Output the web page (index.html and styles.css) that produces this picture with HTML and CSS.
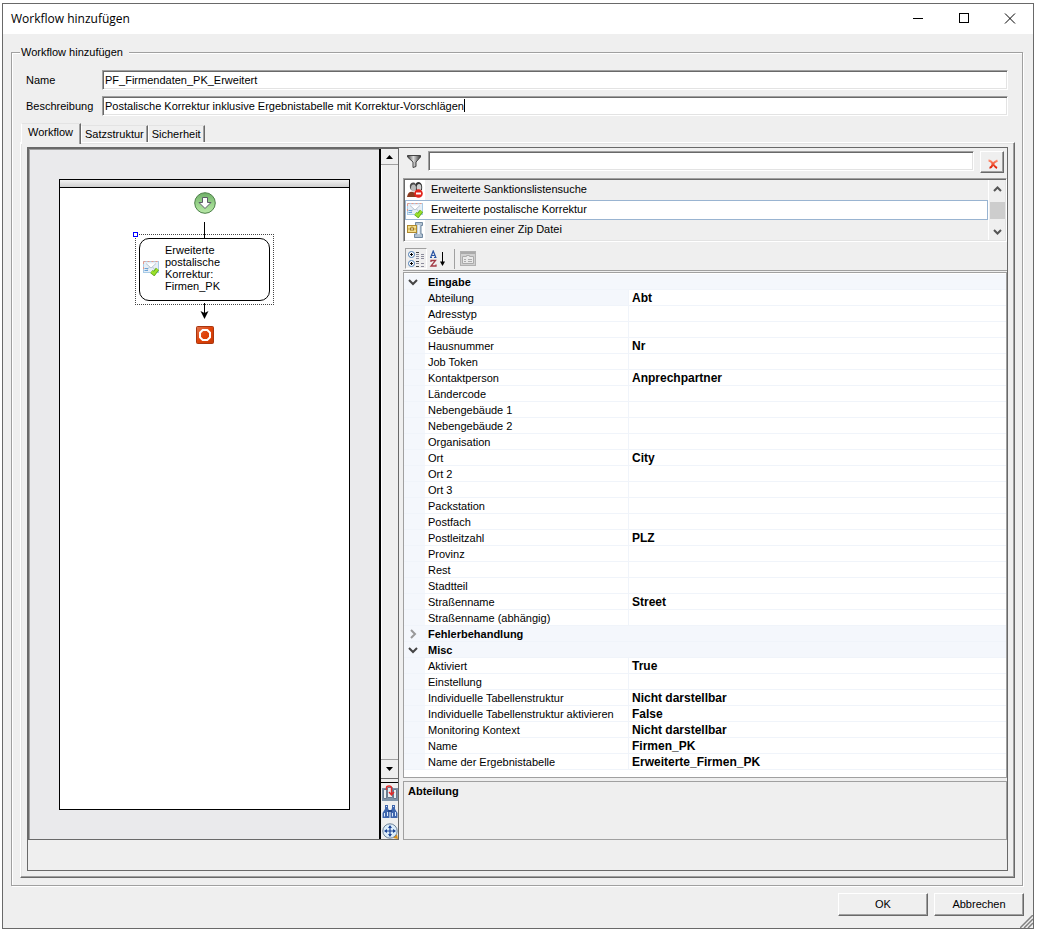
FILE: index.html
```html
<!DOCTYPE html>
<html lang="de">
<head>
<meta charset="UTF-8" />
<title>Workflow hinzufügen</title>
<link rel="stylesheet" href="styles.css">
</head>
<body>
  <svg width="0" height="0" class="defs" aria-hidden="true">
    <defs>
      <linearGradient id="green" x1="0" y1="0" x2="0" y2="1">
        <stop offset="0" stop-color="#6fae68" /><stop offset="0.55" stop-color="#9ad58c" /><stop offset="1" stop-color="#b9e8a8" />
      </linearGradient>
      <linearGradient id="red" x1="0" y1="0" x2="1" y2="1">
        <stop offset="0" stop-color="#e0744f" /><stop offset="0.5" stop-color="#e04208" /><stop offset="1" stop-color="#c93a06" />
      </linearGradient>
      <linearGradient id="metal" x1="0" y1="0" x2="1" y2="0">
        <stop offset="0" stop-color="#333" /><stop offset="0.45" stop-color="#ddd" /><stop offset="1" stop-color="#333" />
      </linearGradient>
      <linearGradient id="cross" x1="0" y1="0" x2="0" y2="1">
        <stop offset="0" stop-color="#ff8a6c" /><stop offset="1" stop-color="#dd1c00" />
      </linearGradient>
      <symbol id="mail" viewBox="0 0 16 16">
        <rect x="0.5" y="1.5" width="15" height="11" fill="#e6eef6" stroke="#a9cbe6" />
        <path d="M0.5 1.5H15.5" stroke="#e89a8a" stroke-dasharray="2 2" />
        <path d="M0.5 2V12" stroke="#e89a8a" stroke-dasharray="2 3" />
        <path d="M4 3.5H13L8.5 8Z" fill="#fff" />
        <path d="M3 3.5L8 8L13 3.5M3 11L6.5 7M13 11L9.5 7" fill="none" stroke="#b9c6d2" />
        <path d="M1.5 8.5H5M1.5 10.5H5" stroke="#6aa3d8" />
        <path d="M8.5 11.5L11 13.5L14.500 9" fill="none" stroke="#5aa516" stroke-width="4" />
        <path d="M8.5 11.5L11 13.5L14.500 9" fill="none" stroke="#9be02b" stroke-width="2.400" />
      </symbol>
    </defs>
  </svg>

  <div class="window">
    <header class="titlebar">
      <h1>Workflow hinzufügen</h1>
      <div class="window-controls">
        <button type="button" aria-label="Minimieren"><svg width="12" height="12"><path d="M1 5.5H11" stroke="#000" /></svg></button>
        <button type="button" aria-label="Maximieren"><svg width="12" height="12"><rect x="1.5" y="0.5" width="9" height="9" fill="none" stroke="#000" /></svg></button>
        <button type="button" aria-label="Schließen"><svg width="12" height="12"><path d="M1 0.500L11 10.500M11 0.500L1 10.500" stroke="#000" /></svg></button>
      </div>
    </header>

    <form class="dialog">
      <fieldset class="group">
        <legend>Workflow hinzufügen</legend>

        <div class="fields">
          <label for="name">Name</label>
          <input class="sunken" id="name" type="text" value="PF_Firmendaten_PK_Erweitert" />
          <label for="beschreibung">Beschreibung</label>
          <div class="field">
            <input class="sunken" id="beschreibung" type="text" value="Postalische Korrektur inklusive Ergebnistabelle mit Korrektur-Vorschlägen" />
            <span class="caret" id="caret"></span>
          </div>
        </div>

        <div class="tabs" role="tablist">
          <button type="button" class="tab active" role="tab" aria-selected="true">Workflow</button>
          <button type="button" class="tab" role="tab" aria-selected="false">Satzstruktur</button>
          <button type="button" class="tab" role="tab" aria-selected="false">Sicherheit</button>
        </div>

        <div class="tab-panel" role="tabpanel">
          <div class="pane">

            <section class="designer">
              <div class="canvas">
                <div class="sheet">
                  <div class="sheet-head"></div>
                  <div class="flow">
                    <svg width="22" height="22" viewBox="0 0 22 22">
                      <circle cx="11" cy="11" r="10.3" fill="url(#green)" stroke="#4d8049" />
                      <path d="M8.5 5.5H13.5V10.5H17L11 16.5L5 10.5H8.5Z" fill="#fff" stroke="#5b5b68" />
                    </svg>
                    <div class="connector"></div>
                    <div class="activity">
                      <span class="handle"></span>
                      <svg width="16" height="16"><use href="#mail" /></svg>
                      <span class="activity-text">Erweiterte postalische Korrektur: Firmen_PK</span>
                    </div>
                    <svg class="arrow" width="9" height="17" viewBox="0 0 9 17">
                      <path d="M4.5 0V12" stroke="#000" />
                      <path d="M0.5 8L4.5 10L8.5 8L4.5 16Z" fill="#000" />
                    </svg>
                    <svg width="18" height="18" viewBox="0 0 18 18">
                      <rect x="0.5" y="0.5" width="17" height="17" rx="1" fill="url(#red)" stroke="#a9360f" />
                      <path d="M6.7 4H11.3L14 6.7V11.3L11.3 14H6.7L4 11.3V6.7Z" fill="none" stroke="#fff" stroke-width="2" />
                    </svg>
                  </div>
                </div>
              </div>
              <div class="designer-bar">
                <button type="button" class="scroll-btn" aria-label="Nach oben"><svg width="7" height="4"><path d="M0 4L3.5 0L7 4Z" /></svg></button>
                <div class="track"></div>
                <button type="button" class="scroll-btn tall" aria-label="Nach unten"><svg width="7" height="4"><path d="M0 0L3.5 4L7 0Z" /></svg></button>
                <div class="tools">
                  <button type="button" aria-label="Seiten">
                    <svg width="16" height="16" viewBox="0 0 16 16">
                      <path d="M0 3H16V16H0Z" fill="#7f93a8" />
                      <path d="M1.5 4.5H4.5V13.5H1.5ZM5.5 2.5H10.5V12.5H5.5ZM11.5 4.5H14.5V13.5H11.5Z" fill="#e9eef2" stroke="#687b90" />
                      <path d="M4.5 5V2.5Q4.5 1 7 1Q9.500 1 9.500 3V9M7 7L9.500 10L12 7" fill="none" stroke="#e02a2a" stroke-width="1.400" />
                    </svg>
                  </button>
                  <button type="button" aria-label="Suchen">
                    <svg width="16" height="16" viewBox="0 0 16 16">
                      <path d="M3 1H6V4L7.500 8V14H0.500V9L3 5ZM10 1H13V5L15.500 9V14H8.500V8L10 4Z" fill="#3f66ad" />
                      <path d="M2.500 9V12.500M5.500 8V12M10.500 9V12.500M13.500 8V12M4 2.500H5M11 2.500H12" stroke="#dce8fa" />
                      <path d="M6 7H10" stroke="#24478c" stroke-width="2" />
                    </svg>
                  </button>
                  <button type="button" aria-label="Verschieben">
                    <svg width="16" height="16" viewBox="0 0 16 16">
                      <path d="M11 15L15 11L16 16Z" fill="#d9901c" />
                      <circle cx="8" cy="8" r="7.200" fill="#dcecf9" stroke="#6d8298" />
                      <path d="M8 3V13M3 8H13" stroke="#1c4598" stroke-width="1.200" />
                      <path d="M8 2L10 5H6ZM8 14L10 11H6ZM2 8L5 6V10ZM14 8L11 6V10Z" fill="#1c4598" />
                    </svg>
                  </button>
                </div>
              </div>
            </section>

            <section class="properties">
              <div class="filter">
                <svg class="funnel" width="14" height="13" viewBox="0 0 14 13">
                  <path d="M0.500 0.500H13.500V2L9 7V11.500L6 12.500V7L0.500 2Z" fill="url(#metal)" stroke="#444" />
                </svg>
                <input class="sunken" type="text" aria-label="Filter" />
                <button type="button" class="raised clear" aria-label="Filter löschen">
                  <svg width="10" height="10" viewBox="0 0 10 10"><path d="M0.500 1.500Q3 1.500 5 5Q7 8 9 9M9.500 1.500Q6 3 4.500 5.500Q3.500 9 1.500 8.500" fill="none" stroke="url(#cross)" stroke-width="2" /></svg>
                </button>
              </div>

              <div class="activities sunken">
                <ul role="listbox" aria-label="Aktivitäten">
                  <li role="option" aria-selected="false">
                    <span class="icon-cell"><svg width="16" height="16" viewBox="0 0 16 16">
                      <path d="M3 6Q2 1 6 0.500Q9 0 9 5V8H4Z" fill="#4c4c4c" />
                      <path d="M8 5Q8 0 12 0Q16 1 15 8H9Z" fill="#333" />
                      <ellipse cx="6.500" cy="6" rx="2.500" ry="3.500" fill="#bababa" />
                      <ellipse cx="12" cy="5.500" rx="2.300" ry="3.500" fill="#d0d0d0" />
                      <path d="M0 15Q1 9 6 10Q10 11 10 15Z" fill="#8b3c20" />
                      <path d="M8 10Q11 7 15 10V14H8Z" fill="#555" />
                      <circle cx="11.500" cy="11.500" r="4.300" fill="#e2251d" />
                      <path d="M9 11.500H14" stroke="#fff" stroke-width="2" />
                    </svg></span>
                    <span>Erweiterte Sanktionslistensuche</span>
                  </li>
                  <li class="selected" role="option" aria-selected="true">
                    <span class="icon-cell"><svg width="16" height="16"><use href="#mail" /></svg></span>
                    <span>Erweiterte postalische Korrektur</span>
                  </li>
                  <li role="option" aria-selected="false">
                    <span class="icon-cell"><svg width="16" height="16" viewBox="0 0 16 16">
                      <path d="M8.500 0.500H15.500V3.500H14V12H15.500V15.500H7.500V12H9.500V3.500H8.500Z" fill="#b3c3d2" stroke="#7189a1" />
                      <path d="M11.700 3V12" stroke="#eef3f8" stroke-width="2" />
                      <rect x="0.500" y="3.500" width="9" height="7" fill="#f3df8e" stroke="#b08a2e" />
                      <path d="M1 7H9M5 4V7" stroke="#c9a244" />
                      <rect x="3.500" y="6" width="3" height="2" fill="#fff" stroke="#9b7622" />
                    </svg></span>
                    <span>Extrahieren einer Zip Datei</span>
                  </li>
                </ul>
                <div class="list-scroll">
                  <svg width="9" height="6"><path d="M1 5L4.500 1.500L8 5" /></svg>
                  <div class="thumb"></div>
                  <svg width="9" height="6"><path d="M1 1L4.500 4.500L8 1" /></svg>
                </div>
              </div>

              <div class="toolbar">
                <button type="button" class="pressed" aria-label="Nach Kategorien">
                  <svg width="18" height="18" viewBox="0 0 18 18">
                    <circle cx="4.500" cy="4.500" r="3" fill="#fff" stroke="#4a7ab0" /><circle cx="4.500" cy="13.500" r="3" fill="#fff" stroke="#4a7ab0" />
                    <path d="M3 4.500H6M4.500 3V6M3 13.500H6M4.500 12V15" stroke="#000" />
                    <path d="M9 2.500H12M9 16.500H12M9 11.500H12" stroke="#444" />
                    <path d="M9 4.500H12M14 4.500H17M9 6.500H12M14 6.500H17M9 8.500H12M14 8.500H17M9 13.500H12M14 13.500H17M14 16.500H17" stroke="#8b8b9b" />
                  </svg>
                </button>
                <button type="button" aria-label="Alphabetisch">
                  <svg width="18" height="18" viewBox="0 0 18 18">
                    <path d="M1 7.500H3M5 7.500H7.500M1.800 7L4.200 1L6.700 7M2.500 5.500H6" fill="none" stroke="#2a55a4" stroke-width="1.200" />
                    <path d="M2 12V10.500H6.500L2 16H7V14.500" fill="none" stroke="#a33a45" stroke-width="1.300" />
                    <path d="M13.500 2V14" stroke="#000" />
                    <path d="M11 11.500H16L13.500 16Z" fill="#000" />
                  </svg>
                </button>
                <span class="separator"></span>
                <button type="button" disabled aria-label="Eigenschaftenseiten">
                  <svg width="16" height="15" viewBox="0 0 16 15">
                    <rect x="0.500" y="0.500" width="15" height="14" fill="#d0d0d0" stroke="#b0b0b0" />
                    <path d="M1 2H15" stroke="#aaa" stroke-width="2" />
                    <path d="M2.500 5.500H6.500V4.500H9.500V5.500H13.500V12.500H2.500Z" fill="#e9e9e9" stroke="#aaa" />
                    <path d="M4 8.500H6M8 8.500H12M4 10.500H6M8 10.500H12" stroke="#aaa" />
                  </svg>
                </button>
              </div>

              <div class="grid-box">
                <table class="grid">
                  <colgroup><col class="col-gutter" /><col class="col-name" /><col /></colgroup>
                  <tbody id="grid-body"></tbody>
                </table>
              </div>

              <div class="description"><strong>Abteilung</strong></div>
            </section>

          </div>
        </div>
      </fieldset>

      <div class="actions">
        <button type="submit" class="raised">OK</button>
        <button type="button" class="raised">Abbrechen</button>
      </div>
    </form>
    <svg class="grip" width="13" height="13" viewBox="0 0 13 13">
      <path d="M0 13L13 0M4 13L13 4M8 13L13 8" stroke="#808080" stroke-width="1.500" />
    </svg>
  </div>

<script>
const categories = [
  { name: 'Eingabe', open: true, rows: [
    ['Abteilung', 'Abt'], ['Adresstyp', ''], ['Gebäude', ''], ['Hausnummer', 'Nr'],
    ['Job Token', ''], ['Kontaktperson', 'Anprechpartner'], ['Ländercode', ''],
    ['Nebengebäude 1', ''], ['Nebengebäude 2', ''], ['Organisation', ''],
    ['Ort', 'City'], ['Ort 2', ''], ['Ort 3', ''], ['Packstation', ''],
    ['Postfach', ''], ['Postleitzahl', 'PLZ'], ['Provinz', ''], ['Rest', ''],
    ['Stadtteil', ''], ['Straßenname', 'Street'], ['Straßenname (abhängig)', '']
  ]},
  { name: 'Fehlerbehandlung', open: false, rows: [] },
  { name: 'Misc', open: true, rows: [
    ['Aktiviert', 'True'], ['Einstellung', ''],
    ['Individuelle Tabellenstruktur', 'Nicht darstellbar'],
    ['Individuelle Tabellenstruktur aktivieren', 'False'],
    ['Monitoring Kontext', 'Nicht darstellbar'],
    ['Name', 'Firmen_PK'], ['Name der Ergebnistabelle', 'Erweiterte_Firmen_PK']
  ]}
];
const selected = 'Abteilung';

const body = document.getElementById('grid-body');
categories.forEach(cat => {
  const chevron = cat.open
    ? '<svg width="10" height="10"><path d="M1 3L5 7L9 3" stroke="#444" /></svg>'
    : '<svg width="10" height="10"><path d="M3 1L7 5L3 9" stroke="#999" /></svg>';
  const head = document.createElement('tr');
  head.className = 'category';
  head.innerHTML = `
    <td class="gutter"><button type="button" aria-label="${cat.name}" aria-expanded="${cat.open}">${chevron}</button></td>
    <th colspan="2" scope="colgroup">${cat.name}</th>
  `;
  body.appendChild(head);

  cat.rows.forEach(([name, value]) => {
    const tr = document.createElement('tr');
    if(name === selected) tr.className = 'current';
    tr.innerHTML = `
      <td class="gutter"></td>
      <th scope="row">${name}</th>
      <td class="value">${value}</td>
    `;
    body.appendChild(tr);
  });
});

// caret sits behind the last character of the description
const beschreibung = document.getElementById('beschreibung');
const caret = document.getElementById('caret');
const ctx = document.createElement('canvas').getContext('2d');

function placeCaret() {
  ctx.font = getComputedStyle(beschreibung).font;
  const width = ctx.measureText(beschreibung.value).width;
  caret.style.left = Math.ceil(width) + 3 + 'px';
}
beschreibung.addEventListener('input', placeCaret);
placeCaret();
</script>
</body>
</html>
```
FILE: styles.css
```css
* {
  box-sizing: border-box;
}
body {
  margin: 0;
  padding: 3px 3px 3px 2px;
  background: #fff;
  color: #000;
  font-family: 'Liberation Sans', Arial, sans-serif;
  font-size: 11px;
  line-height: 14px;
}
button, input {
  font: inherit;
  color: inherit;
  margin: 0;
}
button {
  padding: 0;
  border: none;
  background: none;
}
svg {
  display: block;
  flex-shrink: 0;
}
.defs {
  position: absolute;
}
.window {
  position: relative;
  border: 1px solid #696969;
  background: #efefef;
}
.titlebar {
  display: flex;
  justify-content: space-between;
  align-items: center;
  height: 30px;
  padding-left: 8px;
  background: #fff;
}
.titlebar h1 {
  margin: 0;
  font-family: 'Open Sans', 'Noto Sans', sans-serif;
  font-size: 12px;
  font-weight: 400;
}
.window-controls {
  display: flex;
}
.window-controls button {
  display: flex;
  justify-content: center;
  align-items: center;
  width: 46px;
  height: 30px;
}
.dialog {
  padding: 11px 9px 12px 8px;
}

/* 3D edges */
.sunken {
  border: 1px solid;
  border-color: #a0a0a0 #fff #fff #a0a0a0;
  box-shadow: inset 1px 1px 0 #696969, inset -1px -1px 0 #e3e3e3;
}
.raised {
  border: 1px solid;
  border-color: #fff #696969 #696969 #fff;
  box-shadow: inset -1px -1px 0 #a0a0a0;
  background: #efefef;
}

.group {
  min-width: 0;
  margin: 0 1px 0 0;
  padding: 11px 7px 7px 8px;
  border: 1px solid #a0a0a0;
  box-shadow: 1px 1px 0 #fff, inset 1px 1px 0 #fff;
}
.group legend {
  padding: 0 6px 0 1px;
  background: #efefef;
}
.fields {
  display: grid;
  grid-template-columns: 76px 1fr;
  gap: 6px 0;
  align-items: center;
  padding: 0 7px 0 6px;
}
.fields input {
  display: block;
  height: 20px;
  width: 100%;
  padding: 0 2px;
  background: #fff;
  outline: none;
}
.field {
  position: relative;
}
.caret {
  position: absolute;
  top: 3px;
  width: 1px;
  height: 13px;
  background: #000;
}

.tabs {
  display: flex;
  align-items: flex-end;
  height: 19px;
  margin-top: 7px;
  padding-left: 1px;
}
.tab {
  height: 17px;
  padding: 0 3px;
  border: 1px solid;
  border-color: #e3e3e3 #696969 transparent #fff;
  border-bottom: none;
  box-shadow: inset -1px 0 0 #a0a0a0;
}
.tab.active {
  position: relative;
  height: 21px;
  margin-bottom: -2px;
  padding: 0 7px 4px 6px;
  background: #efefef;
}
.tab-panel {
  padding: 4px 6px 6px 6px;
  border: 1px solid;
  border-color: #fff #696969 #696969 #fff;
  box-shadow: inset -1px -1px 0 #a0a0a0, inset 1px 1px 0 #e3e3e3;
}
.pane {
  display: flex;
  padding-bottom: 30px;
  border: 1px solid #696969;
}

/* designer */
.designer {
  display: flex;
  flex: 0 0 371px;
  border: 1px solid #696969;
}
.canvas {
  display: flex;
  flex: 1;
  padding: 30px 29px 29px 30px;
  border-right: 2px solid #000;
  box-shadow: inset 1px 1px 0 #a0a0a0;
  background: #eaeaec;
}
.sheet {
  flex: 1;
  border: 1px solid #000;
  background: #fff;
}
.sheet-head {
  height: 8px;
  border-bottom: 1px solid #000;
  background: linear-gradient(#f2f2f2, #cfcfcf);
}
.flow {
  display: flex;
  flex-direction: column;
  align-items: center;
  padding-top: 4px;
}
.connector {
  width: 1px;
  height: 16px;
  margin-top: 8px;
  background: #000;
}
.activity {
  position: relative;
  display: flex;
  align-items: center;
  gap: 6px;
  width: 131px;
  height: 63px;
  padding: 0 3px 3px;
  border: 1px solid #000;
  border-radius: 10px;
}
/* dotted selection frame with square corners */
.activity::after {
  content: '';
  position: absolute;
  inset: -5px;
  border: 1px dotted #444;
}
.handle {
  position: absolute;
  left: -7px;
  top: -7px;
  z-index: 1;
  width: 5px;
  height: 5px;
  border: 1px solid #00f;
  background: #fff;
}
.activity-text {
  width: 80px;
  line-height: 12px;
}
.arrow {
  margin: 2px 0 6px;
}
.designer-bar {
  display: flex;
  flex-direction: column;
  width: 17px;
}
.scroll-btn {
  display: flex;
  justify-content: center;
  align-items: center;
  height: 16px;
  border-bottom: 1px solid #a0a0a0;
}
.scroll-btn.tall {
  height: 20px;
  border-top: 1px solid #a0a0a0;
  border-bottom-color: #696969;
}
.track {
  flex: 1;
  border-left: 1px solid #fff;
}
.tools {
  display: flex;
  flex-direction: column;
  gap: 3px;
  margin-top: 3px;
  padding: 2px 0 0 1px;
  border-top: 1px solid #000;
}

/* properties */
.properties {
  flex: 1;
  min-width: 0;
  padding-left: 4px;
}
.filter {
  display: flex;
  align-items: flex-start;
  height: 30px;
  padding: 3px 3px 0 4px;
}
.funnel {
  margin: 4px 7px 0 0;
}
.filter input {
  flex: 1;
  min-width: 0;
  height: 20px;
  background: #fff;
}
.clear {
  display: flex;
  justify-content: center;
  align-items: center;
  width: 24px;
  height: 22px;
  margin-left: 6px;
  padding: 3px 0 0 2px;
}
.activities {
  display: flex;
  padding: 1px;
}
.activities ul {
  flex: 1;
  margin: 0;
  padding: 0;
  list-style: none;
}
.activities li {
  display: flex;
  gap: 6px;
  height: 20px;
  line-height: 18px;
}
.icon-cell {
  display: flex;
  justify-content: center;
  align-items: center;
  width: 20px;
  height: 20px;
  background: #fff;
}
.activities .selected {
  background: #fff;
  box-shadow: inset 0 0 0 1px #99b4d1;
}
.selected .icon-cell {
  background: none;
}
.list-scroll {
  display: flex;
  flex-direction: column;
  justify-content: space-between;
  align-items: center;
  width: 17px;
  padding: 6px 0 5px;
  border-left: 1px solid #fff;
}
.list-scroll path {
  fill: none;
  stroke: #555;
  stroke-width: 2;
}
.thumb {
  width: 15px;
  height: 17px;
  background: #cdcdcd;
}
.toolbar {
  display: flex;
  align-items: flex-start;
  height: 23px;
  margin-top: 6px;
  padding-left: 2px;
  border-bottom: 1px solid #a0a0a0;
}
.toolbar button {
  display: flex;
  justify-content: center;
  align-items: center;
  width: 22px;
  height: 21px;
}
.toolbar .pressed {
  border: 1px solid;
  border-color: #a0a0a0 #fff #fff #a0a0a0;
}
.separator {
  height: 20px;
  margin: 1px 2px 0 5px;
  border-left: 1px solid #a0a0a0;
}
.grid-box {
  margin-top: 1px;
  padding: 1px 0 7px;
  border: 1px solid #a0a0a0;
  background: #fff;
}
.grid {
  width: 100%;
  table-layout: fixed;
  border-spacing: 0;
}
.col-gutter {
  width: 21px;
}
.col-name {
  width: 203px;
}
.grid td, .grid th {
  height: 16px;
  padding: 1px 0 0 3px;
  border-bottom: 1px solid #f0f4fa;
  font-weight: 400;
  line-height: 14px;
  text-align: left;
  white-space: nowrap;
}
.grid .value {
  border-left: 1px solid #f0f4fa;
  font-size: 12px;
  font-weight: 700;
}
.grid .gutter, .grid .category th, .grid .current th {
  background: #f4f7fc;
}
.grid .category th {
  font-weight: 700;
}
.grid .gutter {
  padding: 0 0 0 4px;
}
.gutter button {
  display: block;
}
.gutter path {
  fill: none;
  stroke-width: 2;
}
.description {
  height: 59px;
  margin-top: 3px;
  padding: 2px 4px;
  border: 1px solid #a0a0a0;
}

.actions {
  display: flex;
  justify-content: flex-end;
  gap: 6px;
  margin-top: 7px;
}
.actions button {
  width: 90px;
  height: 23px;
  padding-bottom: 2px;
}
.grip {
  position: absolute;
  right: 0;
  bottom: 0;
}
```
